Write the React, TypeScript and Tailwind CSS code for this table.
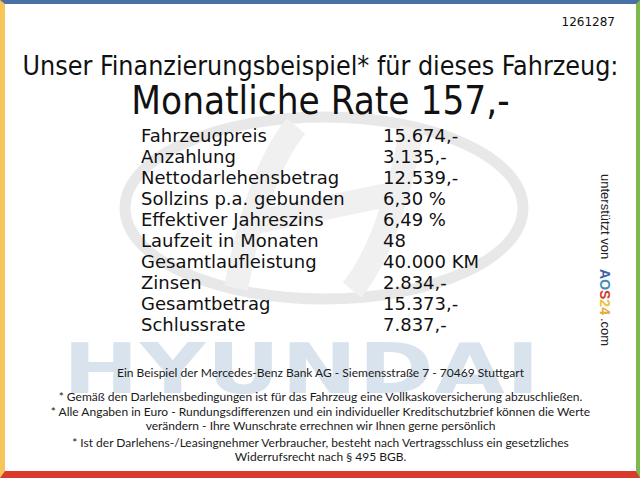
import React from "react"

type Row = { label: string; value: string }

const ROWS: Row[] = [
  { label: "Fahrzeugpreis", value: "15.674,-" },
  { label: "Anzahlung", value: "3.135,-" },
  { label: "Nettodarlehensbetrag", value: "12.539,-" },
  { label: "Sollzins p.a. gebunden", value: "6,30 %" },
  { label: "Effektiver Jahreszins", value: "6,49 %" },
  { label: "Laufzeit in Monaten", value: "48" },
  { label: "Gesamtlaufleistung", value: "40.000 KM" },
  { label: "Zinsen", value: "2.834,-" },
  { label: "Gesamtbetrag", value: "15.373,-" },
  { label: "Schlussrate", value: "7.837,-" },
]

function Watermark() {
  return (
    <div className="absolute inset-0 z-0" aria-hidden="true">
      {/* Hyundai oval */}
      <svg
        className="absolute left-[113px] top-[106px]"
        width="412"
        height="196"
        viewBox="0 0 412 196"
        fill="none"
      >
        <ellipse cx="206" cy="98" rx="199" ry="91" stroke="#e8e8e8" strokeWidth="11" />
        <path d="M178 16 Q140 62 118 178" stroke="#f0f0f0" strokeWidth="24" />
        <path d="M234 180 Q272 134 294 18" stroke="#f0f0f0" strokeWidth="24" />
        <path d="M138 112 L274 84" stroke="#f0f0f0" strokeWidth="24" />
      </svg>
      {/* Hyundai wordmark */}
      <div className="absolute left-[58px] top-[331px] origin-left scale-x-[1.31] whitespace-nowrap font-['DejaVu_Sans'] text-[69px] font-bold leading-none tracking-[1px] text-[#d8e3ed]">
        HYUNDAI
      </div>
    </div>
  )
}

function Sponsor() {
  return (
    <div className="absolute left-[592px] top-[170px] z-10 font-['Liberation_Sans',Arial,sans-serif] text-[13px] leading-[15px] text-[#222] [writing-mode:vertical-rl]">
      <span>unterstützt von</span>
      <span className="ps-[10px] text-[14px] font-bold">
        <span className="text-[#3e63a8]">A</span>
        <span className="text-[#3f8fb8]">O</span>
        <span className="text-[#d23b2c]">S</span>
        <span className="text-[#e9c23d]">2</span>
        <span className="text-[#e7a93a]">4</span>
      </span>
      <span className="ps-[3px]">.com</span>
    </div>
  )
}

export default function App() {
  return (
    <div className="h-[480px] w-[640px] bg-white pb-[2px]">
      <div className="relative h-full overflow-hidden border-t-4 border-r-4 border-b-[7px] border-l-[5px] border-t-[#4a6fa5] border-r-[#7cb84a] border-b-[#d93a2b] border-l-[#f6c65b] bg-white text-[#111]">
        <Watermark />
        <Sponsor />

        <div className="relative z-10 flex flex-col items-center">
          <div className="mt-[10px] self-end pr-[21px] font-['DejaVu_Sans'] text-[12px] leading-[16px]">
            1261287
          </div>

          <h1 className="mt-[21px] whitespace-nowrap font-['DejaVu_Sans_Condensed','DejaVu_Sans',sans-serif] text-[26.6px] leading-[30px] font-normal">
            Unser Finanzierungsbeispiel* für dieses Fahrzeug:
          </h1>
          <h2 className="whitespace-nowrap font-['DejaVu_Sans_Condensed','DejaVu_Sans',sans-serif] text-[38.3px] leading-[40px] font-normal">
            Monatliche Rate 157,-
          </h2>

          <div className="mt-[4px] grid grid-cols-[242px_auto] self-start pl-[136px] font-['DejaVu_Sans',sans-serif] text-[18px] leading-[21px]">
            {ROWS.map((row) => (
              <React.Fragment key={row.label}>
                <span>{row.label}</span>
                <span>{row.value}</span>
              </React.Fragment>
            ))}
          </div>

          <div className="mt-[31px] flex flex-col items-center text-center font-['Lato',sans-serif] text-[12px] leading-[14px] text-[#1a1a1a]">
            <p>Ein Beispiel der Mercedes-Benz Bank AG - Siemensstraße 7 - 70469 Stuttgart</p>
            <p className="mt-[10px]">
              * Gemäß den Darlehensbedingungen ist für das Fahrzeug eine Vollkaskoversicherung abzuschließen.
            </p>
            <p className="mt-[1px] w-[570px]">
              * Alle Angaben in Euro - Rundungsdifferenzen und ein individueller Kreditschutzbrief können die Werte
              verändern - Ihre Wunschrate errechnen wir Ihnen gerne persönlich
            </p>
            <p className="mt-[3px] w-[530px]">
              * Ist der Darlehens-/Leasingnehmer Verbraucher, besteht nach Vertragsschluss ein gesetzliches
              Widerrufsrecht nach § 495 BGB.
            </p>
          </div>
        </div>
      </div>
    </div>
  )
}
